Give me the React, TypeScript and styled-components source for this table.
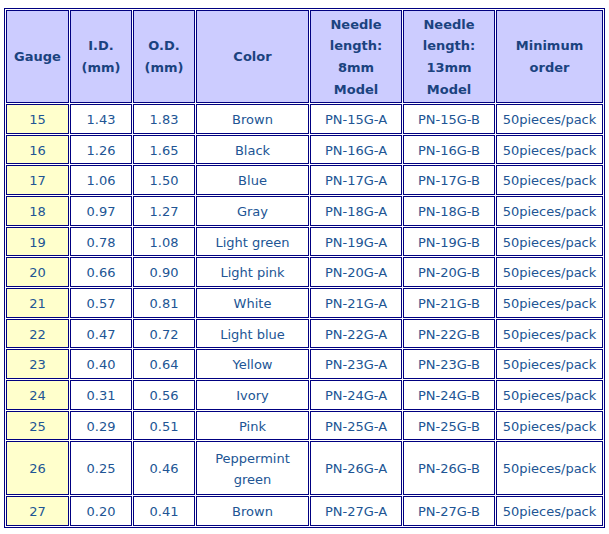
import React from "react";
import styled, { createGlobalStyle } from "styled-components";

const Global = createGlobalStyle`
  * { box-sizing: border-box; }
  body { margin: 8px 4px; background: #ffffff; font-family: "DejaVu Sans", Verdana, sans-serif; }
`;

const Table = styled.table`
  border: 1px solid #000080;
  border-collapse: separate;
  border-spacing: 1px;
  width: 601px;
  table-layout: fixed;
  font-size: 13px;
`;

const Th = styled.th`
  background: #ccccff;
  border: 1px solid #000080;
  color: #1b437f;
  font-weight: bold;
  line-height: 21.7px;
  padding: 1px 2px 0;
  height: 93px;
  text-align: center;
  vertical-align: middle;
`;

const Td = styled.td<{ $gauge?: boolean; $tall?: boolean }>`
  background: ${(p) => (p.$gauge ? "#ffffcc" : "#ffffff")};
  border: 1px solid #000080;
  color: #215594;
  line-height: 21.7px;
  padding: 2px 2px 0;
  height: ${(p) => (p.$tall ? "54px" : "29.67px")};
  text-align: center;
  vertical-align: middle;
  white-space: ${(p) => (p.$tall ? "normal" : "nowrap")};
`;

const widths = [63, 62, 62, 113, 92, 92, 107];

const rows: [string, string, string, string][] = [
  ["15", "1.43", "1.83", "Brown"],
  ["16", "1.26", "1.65", "Black"],
  ["17", "1.06", "1.50", "Blue"],
  ["18", "0.97", "1.27", "Gray"],
  ["19", "0.78", "1.08", "Light green"],
  ["20", "0.66", "0.90", "Light pink"],
  ["21", "0.57", "0.81", "White"],
  ["22", "0.47", "0.72", "Light blue"],
  ["23", "0.40", "0.64", "Yellow"],
  ["24", "0.31", "0.56", "Ivory"],
  ["25", "0.29", "0.51", "Pink"],
  ["26", "0.25", "0.46", "Peppermint green"],
  ["27", "0.20", "0.41", "Brown"],
];

export default function App() {
  return (
    <>
      <Global />
      <Table>
        <colgroup>
          {widths.map((w, i) => (
            <col key={i} style={{ width: w }} />
          ))}
        </colgroup>
        <thead>
          <tr>
            <Th>Gauge</Th>
            <Th>I.D.<br />(mm)</Th>
            <Th>O.D.<br />(mm)</Th>
            <Th>Color</Th>
            <Th>Needle<br />length:<br />8mm<br />Model</Th>
            <Th>Needle<br />length:<br />13mm<br />Model</Th>
            <Th>Minimum<br />order</Th>
          </tr>
        </thead>
        <tbody>
          {rows.map(([g, id, od, color]) => {
            const tall = g === "26";
            return (
              <tr key={g}>
                <Td $gauge $tall={tall}>{g}</Td>
                <Td $tall={tall}>{id}</Td>
                <Td $tall={tall}>{od}</Td>
                <Td $tall={tall}>{tall ? <>Peppermint<br />green</> : color}</Td>
                <Td $tall={tall}>PN-{g}G-A</Td>
                <Td $tall={tall}>PN-{g}G-B</Td>
                <Td $tall={tall}>50pieces/pack</Td>
              </tr>
            );
          })}
        </tbody>
      </Table>
    </>
  );
}
